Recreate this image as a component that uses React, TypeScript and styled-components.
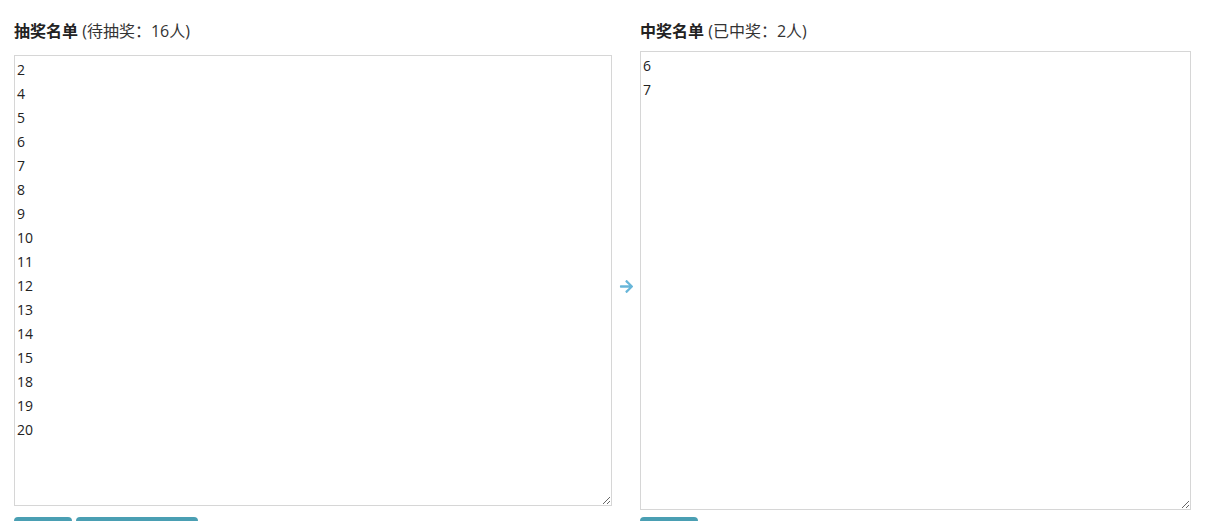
import styled, { createGlobalStyle } from "styled-components";
import { FaArrowRight } from "react-icons/fa";

const pending = ["2", "4", "5", "6", "7", "8", "9", "10", "11", "12", "13", "14", "15", "18", "19", "20"];
const winners = ["6", "7"];

const GlobalStyle = createGlobalStyle`
  body {
    margin: 0;
    background: #fff;
    color: #333;
    font-family: "Open Sans", "Noto Sans CJK SC", sans-serif;
  }
`;

const App = () => {
  return (
    <>
      <GlobalStyle />
      <Page>
        <Column>
          <Title>
            <strong>抽奖名单</strong> (待抽奖：{pending.length}人)
          </Title>
          <ListBox
            readOnly
            value={pending.join("\n")}
            width={598}
            height={451}
            offset={12}
          />
          <ButtonRow gap={11}>
            <Button width={58}>抽奖</Button>
            <Button width={122}>重置抽奖名单</Button>
          </ButtonRow>
        </Column>
        <Arrow>
          <FaArrowRight />
        </Arrow>
        <Column>
          <Title>
            <strong>中奖名单</strong> (已中奖：{winners.length}人)
          </Title>
          <ListBox
            readOnly
            value={winners.join("\n")}
            width={551}
            height={459}
            offset={8}
          />
          <ButtonRow gap={7}>
            <Button width={58}>清空</Button>
          </ButtonRow>
        </Column>
      </Page>
    </>
  );
};

const Page = styled.div`
  display: flex;
  padding: 19px 14px 0;
`;

const Column = styled.div`
  display: flex;
  flex-direction: column;
`;

const Title = styled.div`
  height: 24px;
  line-height: 24px;
  font-size: 16px;
  color: #333;

  strong {
    font-weight: 700;
    color: #222;
  }
`;

const ListBox = styled.textarea<{ width: number; height: number; offset: number }>`
  box-sizing: border-box;
  width: ${({ width }) => width}px;
  height: ${({ height }) => height}px;
  margin: ${({ offset }) => offset}px 0 0;
  padding: 2px 2px;
  border: 1px solid #d6d6d6;
  border-radius: 0;
  font-family: "Open Sans", "Noto Sans CJK SC", sans-serif;
  font-size: 14px;
  line-height: 24px;
  color: #222;
  outline: none;
`;

const ButtonRow = styled.div<{ gap: number }>`
  display: flex;
  gap: 4px;
  margin-top: ${({ gap }) => gap}px;
`;

const Button = styled.button<{ width: number }>`
  width: ${({ width }) => width}px;
  height: 34px;
  border: none;
  border-radius: 4px;
  background: #4a9fb3;
  color: #fff;
  font-family: "Open Sans", "Noto Sans CJK SC", sans-serif;
  font-size: 14px;
`;

const Arrow = styled.div`
  width: 28px;
  display: flex;
  align-items: center;
  justify-content: center;
  color: #68b6d9;
  font-size: 15px;
  padding-top: 2px;
`;

export default App;
